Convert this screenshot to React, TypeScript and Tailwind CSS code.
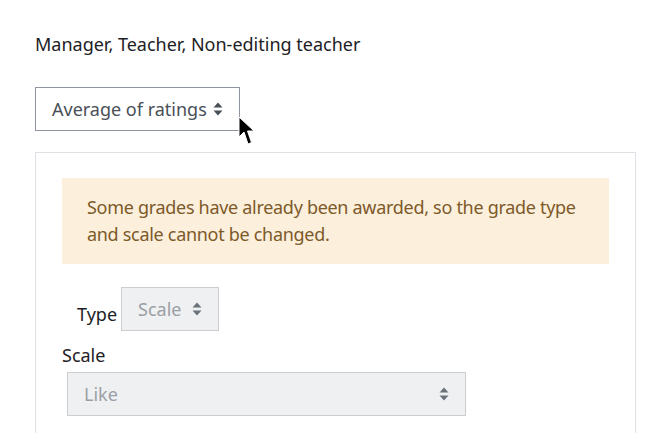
import React from "react"

function Caret({ color = "#495057" }: { color?: string }) {
  return (
    <svg width="10" height="14" viewBox="0 0 10 14" className="shrink-0">
      <path d="M5 0.5 L9.5 5.5 L0.5 5.5 Z" fill={color} />
      <path d="M5 13.5 L9.5 8.5 L0.5 8.5 Z" fill={color} />
    </svg>
  )
}

function Cursor() {
  return (
    <svg
      width="17"
      height="30"
      viewBox="0 0 17 30"
      className="pointer-events-none absolute left-[238px] top-[116px]"
    >
      <path
        d="M1 1 L1 21 L6 16 L10 28 L13.5 26.5 L9.5 15 L16 15 Z"
        fill="#000"
        stroke="#fff"
        strokeWidth="1"
      />
    </svg>
  )
}

export default function App() {
  return (
    <div
      className="relative min-h-screen bg-white pl-[35px] pt-[31px] text-[18px] leading-[27px] text-[#1d2125]"
      style={{ fontFamily: '"Noto Sans", "Open Sans", sans-serif' }}
    >
      <p>Manager, Teacher, Non-editing teacher</p>

      <div className="mt-[29px] flex h-[44px] w-[205px] items-center justify-between border border-[#8f959e] px-4 text-[#495057]">
        <span>Average of ratings</span>
        <Caret />
      </div>

      <div className="mt-[21px] h-[300px] w-[601px] border border-[#dee2e6] px-[26px] pt-[25px]">
        <div className="bg-[#fcefdc] px-[25px] py-[16px] tracking-[-0.3px] text-[#7d5a29]">
          Some grades have already been awarded, so the grade type and scale cannot be changed.
        </div>

        <div className="mt-[23px] flex items-end pl-[15px]">
          <span className="pb-[3px] pr-[4px] leading-[27px]">Type</span>
          <div className="flex h-[44px] w-[98px] items-center justify-between border border-[#cbcdd0] bg-[#eff0f2] px-4 text-[#9a9fa5]">
            <span>Scale</span>
            <Caret color="#6a737b" />
          </div>
        </div>

        <div className="mt-[11px]">Scale</div>
        <div className="ml-[5px] mt-[3px] flex h-[44px] w-[399px] items-center justify-between border border-[#cbcdd0] bg-[#eff0f2] px-4 text-[#9a9fa5]">
          <span>Like</span>
          <Caret color="#6a737b" />
        </div>
      </div>

      <Cursor />
    </div>
  )
}
